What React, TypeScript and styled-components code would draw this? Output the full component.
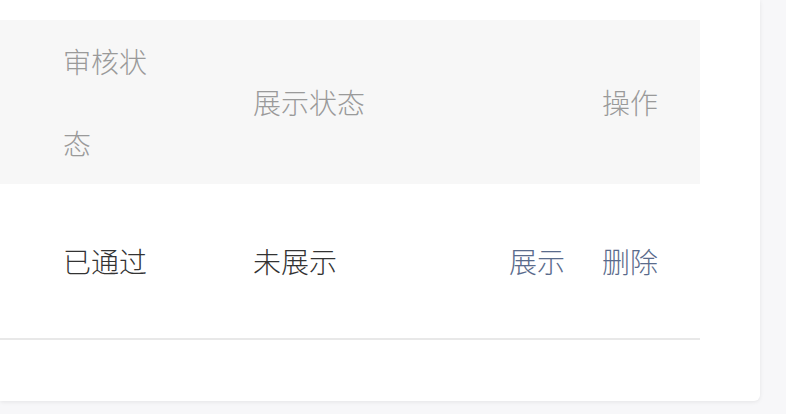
import styled, { createGlobalStyle } from "styled-components";

const GlobalStyle = createGlobalStyle`
  html, body {
    margin: 0;
    padding: 0;
    background: #f7f7f9;
    font-family: "Noto Sans CJK SC", "Noto Sans", sans-serif;
  }
`;

const rows = [{ audit: "已通过", show: "未展示" }];

const App: React.FC = () => {
  return (
    <>
      <GlobalStyle />
      <Page>
        <Card>
          <Table>
            <HeaderRow>
              <Cell $first>
                <AuditTitle>审核状态</AuditTitle>
              </Cell>
              <Cell>展示状态</Cell>
              <Cell $last>操作</Cell>
            </HeaderRow>
            {rows.map((row, i) => (
              <BodyRow key={i}>
                <Cell $first>{row.audit}</Cell>
                <Cell>{row.show}</Cell>
                <Cell $last>
                  <Actions>
                    <ActionLink>展示</ActionLink>
                    <ActionLink>删除</ActionLink>
                  </Actions>
                </Cell>
              </BodyRow>
            ))}
          </Table>
        </Card>
      </Page>
    </>
  );
};

export default App;

const Page = styled.div`
  width: 786px;
  height: 414px;
  overflow: hidden;
`;

const Card = styled.div`
  width: 702px;
  padding: 20px 58px 61px 0;
  background: #ffffff;
  border-radius: 0 0 6px 0;
  box-shadow: 0 1px 4px rgba(0, 0, 0, 0.08);
`;

const Table = styled.div`
  width: 700px;
  display: flex;
  flex-direction: column;
`;

const RowBase = styled.div`
  display: grid;
  grid-template-columns: 253px 1fr auto;
  align-items: center;
  font-size: 28px;
  font-weight: 300;
`;

const HeaderRow = styled(RowBase)`
  height: 164px;
  background: #f7f7f7;
  color: #9a9a9a;
`;

const BodyRow = styled(RowBase)`
  height: 154px;
  color: #333333;
  border-bottom: 2px solid #e8e8e8;
`;

const Cell = styled.div<{ $first?: boolean; $last?: boolean }>`
  padding-left: ${({ $first }) => ($first ? "63px" : "0")};
  padding-right: ${({ $last }) => ($last ? "42px" : "0")};
  text-align: ${({ $last }) => ($last ? "right" : "left")};
  white-space: nowrap;
`;

const AuditTitle = styled.div`
  width: 100px;
  white-space: normal;
  line-height: 82px;
`;

const Actions = styled.div`
  display: flex;
  gap: 37px;
`;

const ActionLink = styled.span`
  color: #5a6b8c;
  cursor: pointer;
`;
